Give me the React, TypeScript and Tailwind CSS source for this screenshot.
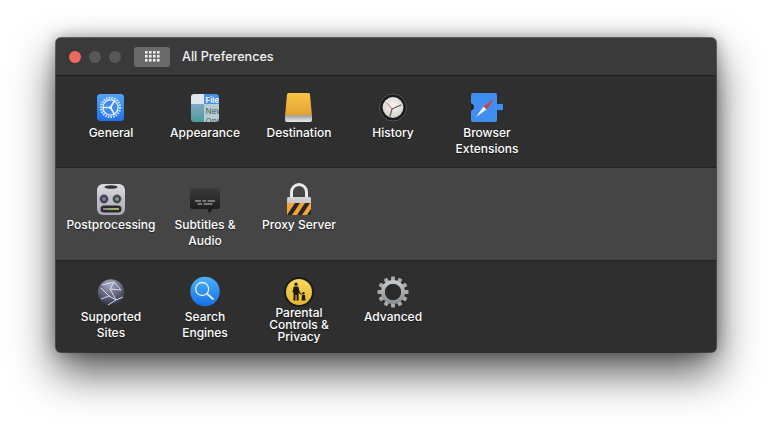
import React from "react";

const General = () => (
  <svg width="32" height="32" viewBox="0 0 32 32">
    <defs>
      <linearGradient id="gen" x1="0" y1="0" x2="0" y2="1"><stop offset="0" stopColor="#52a6f6" /><stop offset="1" stopColor="#2170ef" /></linearGradient>
    </defs>
    <rect x="2" y="3" width="27" height="27" rx="3.5" fill="url(#gen)" />
    <circle cx="15.5" cy="16.5" r="9.6" fill="none" stroke="#d6e6fa" strokeWidth="2.2" strokeDasharray="1.5 1.2" />
    <circle cx="15.5" cy="16.5" r="7.6" fill="#3f8af0" stroke="#e8f1fc" strokeWidth="1.3" />
    <path d="M15.5 16.5 L8.5 16.5 M15.5 16.5 L19.2 10.2 M15.5 16.5 L19.2 22.8" stroke="#e8f1fc" strokeWidth="1.7" strokeLinecap="round" />
    <circle cx="15.5" cy="16.5" r="1.5" fill="#e8f1fc" />
  </svg>
);

const Appearance = () => (
  <svg width="32" height="32" viewBox="0 0 32 32">
    <defs>
      <clipPath id="app"><rect x="2" y="3" width="28" height="28" rx="3" /></clipPath>
      <linearGradient id="appl" x1="0" y1="0" x2="0" y2="1"><stop offset="0" stopColor="#7ea9c9" /><stop offset="1" stopColor="#4f9a98" /></linearGradient>
    </defs>
    <g clipPath="url(#app)">
      <rect x="2" y="3" width="13" height="10" fill="#dfe6ec" />
      <rect x="2" y="13" width="13" height="18" fill="url(#appl)" />
      <rect x="15" y="3" width="15" height="10" fill="#4a8fe6" />
      <rect x="15" y="13" width="15" height="18" fill="#b5cdd3" />
      <text x="16.5" y="11.5" fontSize="8" fontWeight="700" fill="#eaf3fd" fontFamily="Inter, sans-serif">File</text>
      <text x="16.5" y="23" fontSize="8" fontWeight="500" fill="#5c6e74" fontFamily="Inter, sans-serif">New</text>
      <text x="16.5" y="33" fontSize="8" fontWeight="500" fill="#5c6e74" fontFamily="Inter, sans-serif">Ope</text>
    </g>
  </svg>
);

const Destination = () => (
  <svg width="32" height="32" viewBox="0 0 32 32">
    <defs>
      <linearGradient id="dst" x1="0" y1="0" x2="0" y2="1"><stop offset="0" stopColor="#f8c640" /><stop offset="1" stopColor="#e39f35" /></linearGradient>
      <linearGradient id="dsb" x1="0" y1="0" x2="0" y2="1"><stop offset="0" stopColor="#9a9a98" /><stop offset="1" stopColor="#ececea" /></linearGradient>
    </defs>
    <path d="M4 3.5 Q4 2 5.5 2 H25.5 Q27 2 27 3.5 L29 25 H2 Z" fill="url(#dst)" />
    <path d="M2 24 H29 V29 Q29 31 27 31 H4 Q2 31 2 29 Z" fill="url(#dsb)" />
  </svg>
);

const History = () => (
  <svg width="32" height="32" viewBox="0 0 32 32">
    <defs>
      <radialGradient id="his" cx="0.5" cy="0.4" r="0.6"><stop offset="0" stopColor="#f7f6f2" /><stop offset="1" stopColor="#d2d0c9" /></radialGradient>
    </defs>
    <circle cx="16" cy="16.5" r="14.2" fill="#1c1c1c" />
    <circle cx="16" cy="16.5" r="13.6" fill="none" stroke="#5a5a5a" strokeWidth="1" />
    <circle cx="16" cy="16.5" r="10.4" fill="url(#his)" />
    <path d="M15 18 L24 14" stroke="#444" strokeWidth="1" strokeLinecap="round" />
    <path d="M15 18 L13 25" stroke="#666" strokeWidth="1.3" strokeLinecap="round" />
    <path d="M15 18 L10 12" stroke="#d34a3f" strokeWidth="0.8" strokeLinecap="round" />
  </svg>
);

const Browser = () => (
  <svg width="32" height="32" viewBox="0 0 32 32">
    <path d="M0 4 Q0 2 2 2 H24 Q26 2 26 4 V13 H28.5 A3.3 3.3 0 1 1 28.5 19 H26 V29 Q26 31 24 31 H2 Q0 31 0 29 V19.5 A3.6 3.6 0 0 0 0 12.5 Z" fill="#3f8ef0" />
    <path d="M0 12.5 A3.6 3.6 0 0 1 0 19.5 Z" fill="#222" />
    <path d="M23 8 L12.5 15.5 L15.5 18.5 Z" fill="#e0392f" />
    <path d="M5 26 L12.5 15.5 L15.5 18.5 Z" fill="#f5f5f5" />
  </svg>
);

const Postprocessing = () => (
  <svg width="32" height="32" viewBox="0 0 32 32">
    <defs>
      <linearGradient id="pp" x1="0" y1="0" x2="0" y2="1"><stop offset="0" stopColor="#dcdbe0" /><stop offset="1" stopColor="#a9a8b3" /></linearGradient>
      <linearGradient id="ppm" x1="0" y1="0" x2="1" y2="0"><stop offset="0" stopColor="#b65fb5" /><stop offset="0.5" stopColor="#7fbf60" /><stop offset="1" stopColor="#d0a04a" /></linearGradient>
    </defs>
    <rect x="2" y="1" width="28" height="31" rx="6" fill="url(#pp)" />
    <ellipse cx="16" cy="4" rx="6.5" ry="1.8" fill="#333335" />
    <circle cx="9" cy="16" r="4.2" fill="#3b3b46" stroke="#77757f" strokeWidth="0.8" />
    <circle cx="9" cy="16" r="2" fill="#8f6fb5" />
    <circle cx="22" cy="16" r="4.2" fill="#3b3b46" stroke="#77757f" strokeWidth="0.8" />
    <circle cx="22" cy="16" r="2" fill="#6fa68d" />
    <rect x="5.5" y="22.5" width="21" height="7" rx="3.5" fill="#2c2c30" />
    <rect x="8" y="25" width="16" height="2" fill="url(#ppm)" />
  </svg>
);

const Subtitles = () => (
  <svg width="32" height="32" viewBox="0 0 32 32">
    <defs>
      <linearGradient id="sub" x1="0" y1="0" x2="0" y2="1"><stop offset="0" stopColor="#3a3a3a" /><stop offset="1" stopColor="#171717" /></linearGradient>
    </defs>
    <path d="M1 7.5 Q1 5 3.5 5 H28.5 Q31 5 31 7.5 V23.5 Q31 26 28.5 26 H23.5 L20 31 L19 26 H3.5 Q1 26 1 23.5 Z" fill="url(#sub)" />
    <path d="M6 18 H12 M13.5 18 H17 M18.5 18 H26 M8.5 21 H13 M14.5 21 H23.5" stroke="#ddd" strokeWidth="0.9" />
  </svg>
);

const Proxy = () => (
  <svg width="32" height="32" viewBox="0 0 32 32">
    <defs>
      <linearGradient id="lk" x1="0" y1="0" x2="0" y2="1"><stop offset="0" stopColor="#d5d4d4" /><stop offset="1" stopColor="#a8a8a8" /></linearGradient>
      <clipPath id="lkc"><rect x="4" y="20" width="24" height="12" /></clipPath>
    </defs>
    <path d="M8.5 15 V9 A7.5 7.5 0 0 1 23.5 9 V15" fill="none" stroke="#e8e8e8" strokeWidth="3" />
    <rect x="4" y="14" width="24" height="18" rx="1.5" fill="url(#lk)" />
    <g clipPath="url(#lkc)">
      <rect x="4" y="20" width="24" height="12" fill="#efa43a" />
      <path d="M4 32 L12 20 H17 L9 32 Z M14 32 L22 20 H27 L19 32 Z M24 32 L32 20 H37 L29 32 Z" fill="#2a2520" />
    </g>
  </svg>
);

const Sites = () => (
  <svg width="32" height="32" viewBox="0 0 32 32">
    <defs>
      <radialGradient id="gl" cx="0.45" cy="0.2" r="0.85"><stop offset="0" stopColor="#a6a9c6" /><stop offset="1" stopColor="#26283a" /></radialGradient>
    </defs>
    <circle cx="16" cy="16.5" r="13.3" fill="url(#gl)" />
    <path d="M7 9 L19 6 L26 14 M19 6 L15 13 L21 24 L14 20 L6 12 M15 13 L26 14 M21 24 L13 29 M14 20 L6 23 M21 24 L28 21" fill="none" stroke="#e4e6f2" strokeWidth="0.9" />
  </svg>
);

const Search = () => (
  <svg width="32" height="32" viewBox="0 0 32 32">
    <defs>
      <linearGradient id="se" x1="0" y1="0" x2="0" y2="1"><stop offset="0" stopColor="#4ab2f7" /><stop offset="1" stopColor="#176fe8" /></linearGradient>
    </defs>
    <circle cx="16" cy="15.5" r="14.7" fill="url(#se)" />
    <circle cx="13.2" cy="13" r="6.5" fill="none" stroke="#e4f0fc" strokeWidth="1.3" />
    <path d="M18 17.8 L24 23" stroke="#e4f0fc" strokeWidth="1.9" strokeLinecap="round" />
  </svg>
);

const Parental = () => (
  <svg width="32" height="32" viewBox="0 0 32 32">
    <defs>
      <linearGradient id="pa" x1="0" y1="0" x2="0" y2="1"><stop offset="0" stopColor="#f7d75e" /><stop offset="1" stopColor="#e5b62e" /></linearGradient>
    </defs>
    <circle cx="16" cy="16" r="15" fill="#1a1a1a" />
    <circle cx="16" cy="16" r="13" fill="url(#pa)" />
    <circle cx="13" cy="8.2" r="1.6" fill="#1e1a10" />
    <path d="M10.8 10.5 H15.2 L16.8 16 L19 18.4 L18.4 19 L15.6 16.8 V24.5 H13.6 V19 H12.5 V24.5 H10.5 V16.5 L9.4 16.2 Z" fill="#1e1a10" />
    <circle cx="20.4" cy="17.3" r="1.2" fill="#1e1a10" />
    <path d="M19 19 H22 L22.5 24.5 H18.6 Z" fill="#1e1a10" />
  </svg>
);

const Advanced = () => {
  const teeth = Array.from({ length: 12 }, (_, i) => i * 30);
  return (
    <svg width="32" height="32" viewBox="0 0 32 32">
      <defs>
        <linearGradient id="ad" x1="0" y1="0" x2="0" y2="1"><stop offset="0" stopColor="#c4c7ca" /><stop offset="1" stopColor="#8d9093" /></linearGradient>
      </defs>
      {teeth.map((a) => (
        <rect key={a} x="14" y="0.5" width="4" height="6" rx="0.8" fill="#a8abae" transform={`rotate(${a} 16 16)`} />
      ))}
      <circle cx="16" cy="16" r="10" fill="none" stroke="url(#ad)" strokeWidth="4" />
      <circle cx="16" cy="16" r="8" fill="#2b2b2b" />
    </svg>
  );
};

type It = { icon: React.ReactNode; label: React.ReactNode; kind?: "low" | "tight" };

const textClass = {
  normal: "mt-[2px] text-center text-[12px] font-medium leading-[16px] text-white [text-shadow:0_1px_1px_rgba(0,0,0,0.5)]",
  low: "mt-[1px] text-center text-[12px] font-medium leading-[16px] text-white [text-shadow:0_1px_1px_rgba(0,0,0,0.5)]",
  tight: "-mt-[1px] text-center text-[12px] font-medium leading-[12px] text-white [text-shadow:0_1px_1px_rgba(0,0,0,0.5)]",
};

const Item = ({ icon, label, kind }: It) => (
  <div className="flex w-[94px] shrink-0 flex-col items-center">
    <div className="h-8 w-8">{icon}</div>
    <div className={textClass[kind ?? "normal"]}>{label}</div>
  </div>
);

const rows: It[][] = [
  [
    { icon: <General />, label: "General" },
    { icon: <Appearance />, label: "Appearance" },
    { icon: <Destination />, label: "Destination" },
    { icon: <History />, label: "History" },
    { icon: <Browser />, label: <>Browser<br />Extensions</> },
  ],
  [
    { icon: <Postprocessing />, label: "Postprocessing" },
    { icon: <Subtitles />, label: <>Subtitles &amp;<br />Audio</> },
    { icon: <Proxy />, label: "Proxy Server" },
  ],
  [
    { icon: <Sites />, label: <>Supported<br />Sites</>, kind: "low" },
    { icon: <Search />, label: <>Search<br />Engines</>, kind: "low" },
    { icon: <Parental />, label: <>Parental<br />Controls &amp;<br />Privacy</>, kind: "tight" },
    { icon: <Advanced />, label: "Advanced", kind: "low" },
  ],
];

export default function App() {
  return (
    <div className="h-[426px] w-[772px] overflow-hidden bg-white pl-[56px] pt-[38px] font-['Inter','Liberation_Sans',sans-serif]">
      <div className="flex h-[314px] w-[660px] flex-col overflow-hidden rounded-[5px] bg-[#2f2f2f] shadow-[0_20px_44px_rgba(0,0,0,0.68),0_0_16px_rgba(0,0,0,0.35),0_0_0_1px_rgba(95,95,95,0.8)]">
        <div className="flex h-[38px] shrink-0 items-center border-b border-[#1f1f1f] bg-[#3a3a3a] pl-[13px]">
          <span className="h-3 w-3 rounded-full bg-[#ed6a5e]" />
          <span className="ml-2 h-3 w-3 rounded-full bg-[#585858]" />
          <span className="ml-2 h-3 w-3 rounded-full bg-[#585858]" />
          <div className="ml-[13px] flex h-5 w-9 items-center justify-center rounded-[3px] bg-[#6a6a6a]">
            <svg width="15" height="11" viewBox="0 0 15 11" fill="#eeeeee">
              {[0, 4, 8].flatMap((y) =>
                [0, 4, 8, 12].map((x) => <rect key={`${x}-${y}`} x={x} y={y} width="2.6" height="2.6" />)
              )}
            </svg>
          </div>
          <span className="ml-3 pt-[2px] text-[12.6px] font-medium text-[#f2f2f2]">All Preferences</span>
        </div>
        <div className="flex h-[92px] shrink-0 border-b border-[#242424] bg-[#2f2f2f] pl-2 pt-[15px]">
          {rows[0].map((it, i) => <Item key={i} {...it} />)}
        </div>
        <div className="flex h-[93px] shrink-0 border-b border-[#242424] bg-[#454545] pl-2 pt-[15px]">
          {rows[1].map((it, i) => <Item key={i} {...it} />)}
        </div>
        <div className="flex min-h-0 flex-1 bg-[#2f2f2f] pl-2 pt-[15px]">
          {rows[2].map((it, i) => <Item key={i} {...it} />)}
        </div>
      </div>
    </div>
  );
}
